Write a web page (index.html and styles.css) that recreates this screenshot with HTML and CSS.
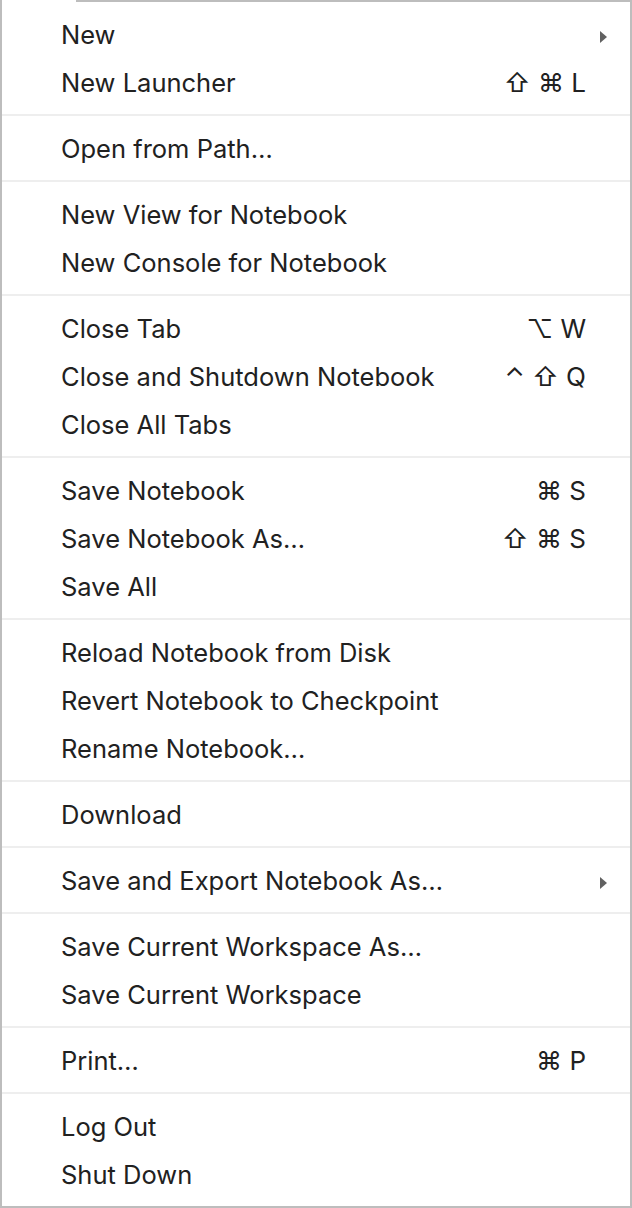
FILE: index.html
```html
<!DOCTYPE html>
<html>
<head>
<meta charset="utf-8">
<link rel="stylesheet" href="styles.css">
</head>
<body>
<div class="menu">
  <div class="tab-cover"></div>
  <ul class="items">
    <li class="item"><span class="label">New</span><span class="sub"><svg width="7" height="12" viewBox="0 0 7 12"><path d="M0 0 L7 6 L0 12 Z" fill="#616161"/></svg></span></li>
    <li class="item"><span class="label">New Launcher</span><span class="keys">⇧ ⌘ L</span><span class="sub"></span></li>
    <li class="sep"></li>
    <li class="item"><span class="label">Open from Path…</span><span class="sub"></span></li>
    <li class="sep"></li>
    <li class="item"><span class="label">New View for Notebook</span><span class="sub"></span></li>
    <li class="item"><span class="label">New Console for Notebook</span><span class="sub"></span></li>
    <li class="sep"></li>
    <li class="item"><span class="label">Close Tab</span><span class="keys">⌥ W</span><span class="sub"></span></li>
    <li class="item"><span class="label">Close and Shutdown Notebook</span><span class="keys">⌃ ⇧ Q</span><span class="sub"></span></li>
    <li class="item"><span class="label">Close All Tabs</span><span class="sub"></span></li>
    <li class="sep"></li>
    <li class="item"><span class="label">Save Notebook</span><span class="keys">⌘ S</span><span class="sub"></span></li>
    <li class="item"><span class="label">Save Notebook As…</span><span class="keys">⇧ ⌘ S</span><span class="sub"></span></li>
    <li class="item"><span class="label">Save All</span><span class="sub"></span></li>
    <li class="sep"></li>
    <li class="item"><span class="label">Reload Notebook from Disk</span><span class="sub"></span></li>
    <li class="item"><span class="label">Revert Notebook to Checkpoint</span><span class="sub"></span></li>
    <li class="item"><span class="label">Rename Notebook…</span><span class="sub"></span></li>
    <li class="sep"></li>
    <li class="item"><span class="label">Download</span><span class="sub"></span></li>
    <li class="sep"></li>
    <li class="item"><span class="label">Save and Export Notebook As…</span><span class="sub"><svg width="7" height="12" viewBox="0 0 7 12"><path d="M0 0 L7 6 L0 12 Z" fill="#616161"/></svg></span></li>
    <li class="sep"></li>
    <li class="item"><span class="label">Save Current Workspace As…</span><span class="sub"></span></li>
    <li class="item"><span class="label">Save Current Workspace</span><span class="sub"></span></li>
    <li class="sep"></li>
    <li class="item"><span class="label">Print…</span><span class="keys">⌘ P</span><span class="sub"></span></li>
    <li class="sep"></li>
    <li class="item"><span class="label">Log Out</span><span class="sub"></span></li>
    <li class="item"><span class="label">Shut Down</span><span class="sub"></span></li>
  </ul>
</div>
</body>
</html>
```

FILE: styles.css
```css
html, body {
  margin: 0;
  padding: 0;
  background: #ffffff;
}
.menu {
  position: relative;
  box-sizing: border-box;
  width: 632px;
  height: 1208px;
  border: 2px solid #bdbdbd;
  background: #ffffff;
  font-family: "Inter", "Liberation Sans", "DejaVu Sans", sans-serif;
  font-size: 25.5px;
  color: #212121;
}
.tab-cover {
  position: absolute;
  left: 0;
  top: -2px;
  width: 74px;
  height: 2px;
  background: #ffffff;
}
.items {
  list-style: none;
  margin: 0;
  padding: 8px 0;
}
.item {
  display: flex;
  align-items: center;
  box-sizing: border-box;
  height: 48px;
  line-height: 46px;
  padding-top: 2px;
  padding-left: 59px;
}
.label {
  flex: 1;
  white-space: nowrap;
}
.keys {
  white-space: nowrap;
  font-size: 26px;
  font-family: "Inter", "DejaVu Sans", sans-serif;
}
.sub {
  display: flex;
  align-items: center;
  width: 44px;
  height: 46px;
  padding-left: 14px;
  box-sizing: border-box;
  padding-top: 4px;
}
.sep {
  height: 2px;
  margin: 8px 0;
  background: #eeeeee;
}
```
